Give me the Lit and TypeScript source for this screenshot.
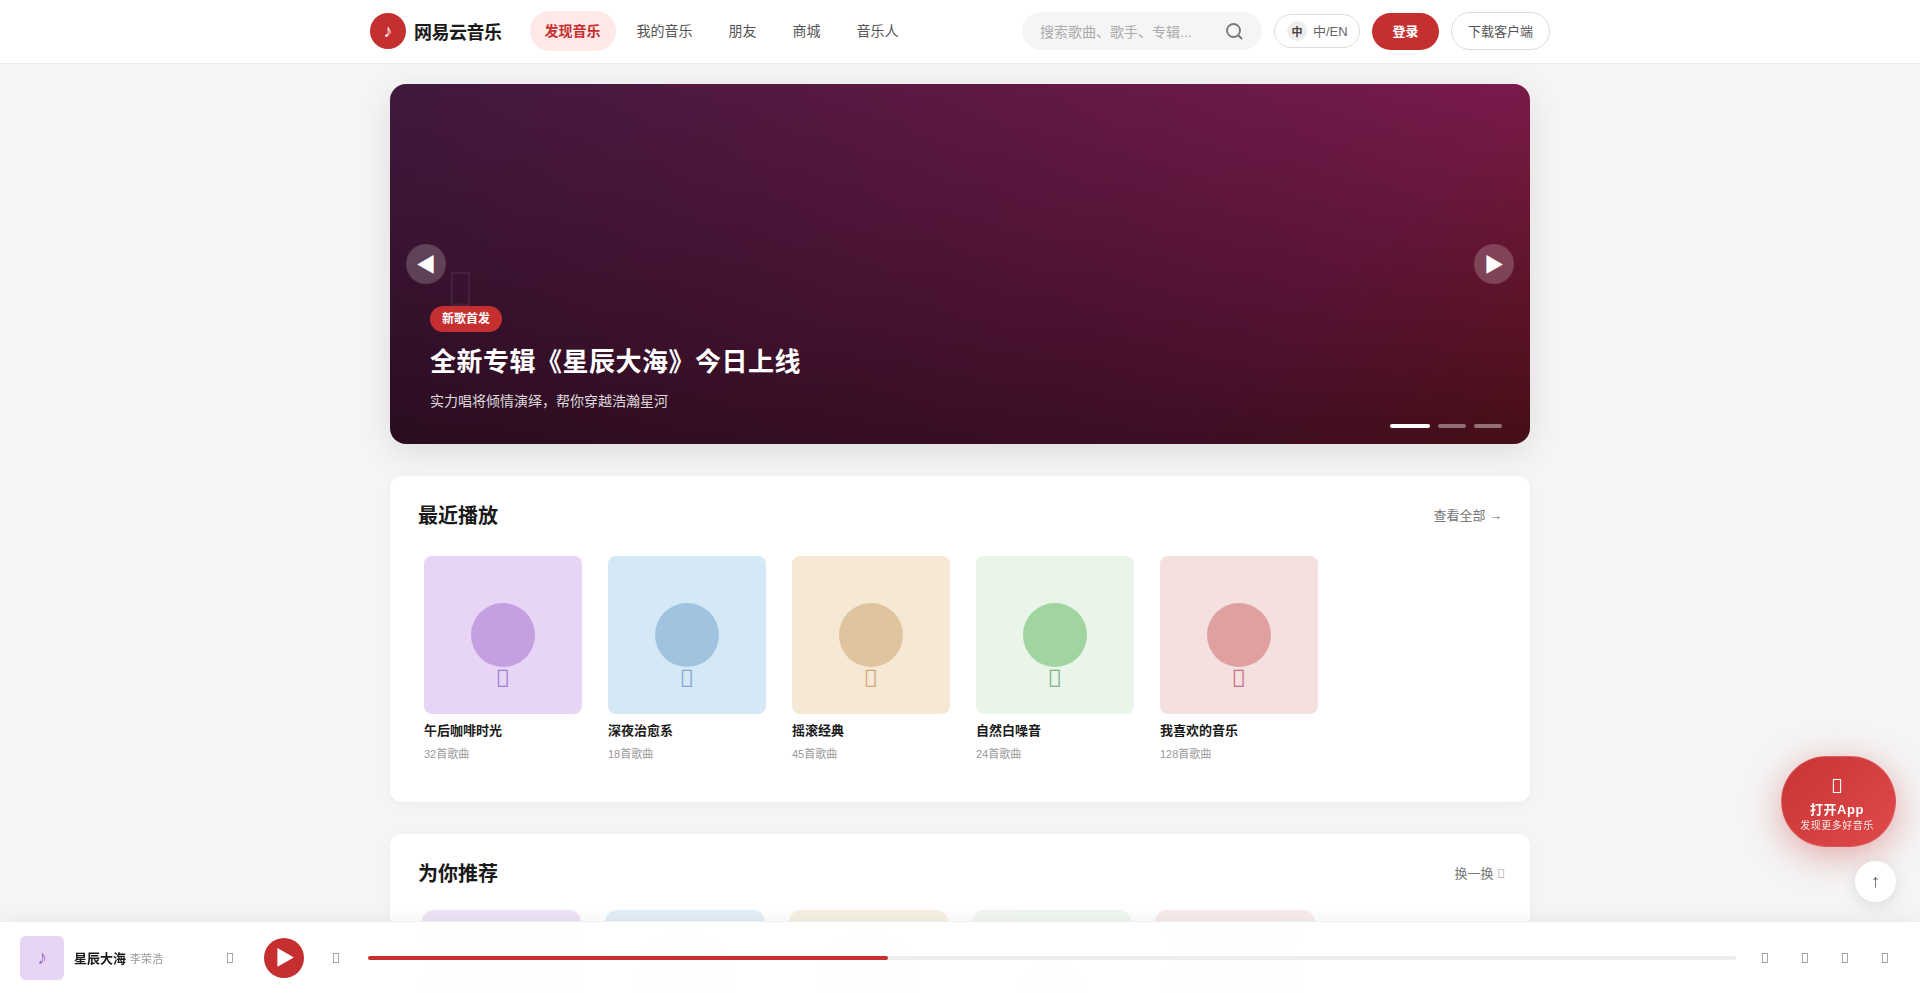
import { LitElement, html, css } from "lit";
import { customElement } from "lit/decorators.js";

const T = "\uf001";
const recent = [
  { c: "purple", t: "午后咖啡时光", s: "32首歌曲" },
  { c: "blue", t: "深夜治愈系", s: "18首歌曲" },
  { c: "orange", t: "摇滚经典", s: "45首歌曲" },
  { c: "green", t: "自然白噪音", s: "24首歌曲" },
  { c: "red", t: "我喜欢的音乐", s: "128首歌曲" },
];
const recs = [
  { c: "purple", t: "今日推荐", s: "30首歌曲" },
  { c: "blue", t: "华语流行", s: "50首歌曲" },
  { c: "orange", t: "民谣精选", s: "40首歌曲" },
  { c: "green", t: "轻音乐", s: "36首歌曲" },
  { c: "red", t: "经典老歌", s: "60首歌曲" },
];

@customElement("app-root")
export class AppRoot extends LitElement {
  static styles = css`
    :host {
      display: block;
      min-height: 100vh;
      background: #f5f5f5;
      font-family: "Liberation Sans", "Noto Sans CJK SC", sans-serif;
      color: #1a1a1a;
      padding-bottom: 90px;
    }
    .tofu { font-family: "Noto Sans", sans-serif; font-style: normal; font-weight: 400; }
    .header { background: #fff; border-bottom: 1px solid #eee; height: 64px; box-sizing: border-box; }
    .header-in { width: 1180px; margin: 0 auto; height: 62px; display: flex; align-items: center; }
    .logo { display: flex; align-items: center; gap: 8px; font-size: 18px; font-weight: 700; letter-spacing: -0.5px; margin-right: 28px; }
    .logo-mark { width: 36px; height: 36px; border-radius: 50%; background: #c62f2f; color: #fff; display: flex; align-items: center; justify-content: center; font-size: 18px; font-weight: 400; letter-spacing: 0; }
    .nav { display: flex; gap: 6px; }
    .nav a { padding: 10px 15px; font-size: 14px; line-height: 20px; color: #555; border-radius: 20px; }
    .nav a.on { background: #ffe8e8; color: #c62f2f; font-weight: 700; }
    .right { margin-left: auto; display: flex; align-items: center; gap: 12px; }
    .search { width: 240px; height: 38px; box-sizing: border-box; background: #f5f5f5; border-radius: 20px; display: flex; align-items: center; justify-content: space-between; padding: 0 18px; color: #aaa; font-size: 14px; }
    .search svg { display: block; }
    .lang { height: 34px; width: 86px; box-sizing: border-box; border: 1px solid #ddd; border-radius: 17px; display: flex; align-items: center; gap: 6px; padding: 0 12px 2px; font-size: 13px; color: #666; white-space: nowrap; }
    .lang b { width: 20px; height: 20px; margin-top: 2px; border-radius: 50%; background: #eee; font-size: 11px; font-weight: 700; color: #444; display: flex; align-items: center; justify-content: center; flex: none; }
    .login { height: 37px; width: 67px; box-sizing: border-box; padding-bottom: 2px; border-radius: 20px; background: #c62f2f; color: #fff; font-size: 13px; font-weight: 700; display: flex; align-items: center; justify-content: center; }
    .dl { height: 38px; width: 99px; box-sizing: border-box; padding-bottom: 2px; border: 1px solid #ddd; border-radius: 20px; color: #555; font-size: 13px; display: flex; align-items: center; justify-content: center; }
    .main { width: 1140px; margin: 20px auto 0; display: flex; flex-direction: column; gap: 32px; }
    .hero { position: relative; height: 360px; border-radius: 16px; background: linear-gradient(180deg, rgba(0,0,0,0) 0%, rgba(0,0,0,.5) 100%), linear-gradient(135deg, #40183c 0%, #7a1a4a 76%, #8a1c2c 100%); box-shadow: 0 8px 32px rgba(0,0,0,.1); display: flex; flex-direction: column; align-items: flex-start; justify-content: flex-end; padding: 0 40px 32px; box-sizing: border-box; }
    .hero-icon { position: absolute; left: 56px; top: 169px; font-size: 48px; line-height: 70px; color: rgba(255,255,255,.08); }
    .tag { height: 26px; box-sizing: border-box; padding: 0 12px; border-radius: 13px; background: #c62f2f; color: #fff; font-size: 12px; line-height: 26px; font-weight: 700; position: relative; }
    .hero h1 { margin: 11px 0 9px; font-size: 26px; line-height: 38px; letter-spacing: 0.5px; font-weight: 700; color: #fff; }
    .hero p { margin: 0; font-size: 14px; line-height: 22px; color: rgba(255,255,255,.85); }
    .arrow { position: absolute; top: 160px; width: 40px; height: 40px; box-sizing: border-box; padding-bottom: 2px; border-radius: 50%; background: rgba(255,255,255,.2); color: #fff; display: flex; align-items: center; justify-content: center; font-size: 20px; }
    .arrow.l { left: 16px; }
    .arrow.r { right: 16px; }
    .dots { position: absolute; right: 28px; bottom: 16px; display: flex; gap: 8px; }
    .dots i { width: 28px; height: 4px; border-radius: 2px; background: rgba(255,255,255,.4); }
    .dots i.on { width: 40px; background: #fff; }
    .section { background: #fff; border-radius: 12px; padding: 23px 28px 28px; box-shadow: 0 2px 12px rgba(0,0,0,.04); }
    .sec-head { display: flex; align-items: center; justify-content: space-between; height: 30px; margin-bottom: 27px; }
    .rec .sec-head { margin-bottom: 23px; }
    .sec-head h2 { margin: 0; font-size: 20px; font-weight: 700; }
    .sec-head span { font-size: 13px; color: #777; white-space: nowrap; }
    .sec-head .tofu { color: #aaa; margin-right: -3px; }
    .grid { display: flex; gap: 14px; padding-bottom: 12px; }
    .card { width: 170px; padding: 0 6px; box-sizing: border-box; }
    .cover { height: 158px; border-radius: 8px; position: relative; display: flex; align-items: center; justify-content: center; }
    .disc { width: 64px; height: 64px; border-radius: 50%; }
    .cover .ico { position: absolute; left: 0; right: 0; top: 107px; text-align: center; font-size: 24px; line-height: 30px; }
    .purple .cover { background: #e8d5f5; } .purple .disc { background: #c4a0e0; } .purple .ico { color: #9a80d0; }
    .blue .cover { background: #d5e8f5; } .blue .disc { background: #a0c4e0; } .blue .ico { color: #85a5d5; }
    .orange .cover { background: #f5e8d5; } .orange .disc { background: #e0c4a0; } .orange .ico { color: #d4a57a; }
    .green .cover { background: #e8f5e8; } .green .disc { background: #a0d4a0; } .green .ico { color: #7fb08a; }
    .red .cover { background: #f5e0e0; } .red .disc { background: #e0a0a0; } .red .ico { color: #c9708a; }
    .card .t { margin-top: 7px; font-size: 13px; line-height: 20px; font-weight: 700; }
    .card .s { margin-top: 5px; font-size: 11px; line-height: 16px; color: #999; }
    .grid2 { display: grid; grid-template-columns: repeat(6, 1fr); gap: 16px; }
    .grid2 .card { width: auto; padding: 0 4px; }
    .grid2 .cover { height: 160px; border-radius: 12px; opacity: .65; }
    .player { position: fixed; left: 0; right: 0; bottom: 0; height: 72px; box-sizing: border-box; border-top: 1px solid #eee; background: rgba(255,255,255,.95); backdrop-filter: blur(20px); box-shadow: 0 -2px 20px rgba(0,0,0,.05); display: flex; align-items: center; padding: 0 19px 0 20px; }
    .p-cover { width: 44px; height: 44px; border-radius: 6px; background: #e8d5f5; color: #9b6fc7; font-size: 20px; display: flex; align-items: center; justify-content: center; flex: none; }
    .p-info { width: 122px; margin: 0 18px 0 10px; display: flex; align-items: baseline; gap: 4px; flex: none; }
    .p-info b { font-size: 13px; }
    .p-info span { font-size: 11px; color: #999; }
    .pbtn { width: 32px; height: 32px; display: flex; align-items: center; justify-content: center; color: #888; flex: none; font-size: 14px; }
    .play { width: 40px; height: 40px; box-sizing: border-box; padding: 0 0 2px 2px; border-radius: 50%; background: #c62f2f; color: #fff; display: flex; align-items: center; justify-content: center; font-size: 20px; margin: 0 16px 0 18px; flex: none; }
    .bar { flex: 1; height: 4px; border-radius: 2px; background: #eee; margin: 0 13px 0 16px; }
    .bar i { display: block; width: 38%; height: 100%; border-radius: 2px; background: #c62f2f; }
    .p-right { display: flex; gap: 8px; }
    .fab { position: fixed; right: 24px; bottom: 146px; width: 115px; height: 91px; box-sizing: border-box; border-radius: 46px; background: linear-gradient(135deg, #c83333, #e04a4a); box-shadow: 0 8px 36px rgba(198,47,47,.4); color: #fff; display: flex; flex-direction: column; align-items: center; padding: 14px 3px 0 0; border: 1px solid rgba(255,255,255,.15); }
    .fab .tofu { font-size: 20px; line-height: 30px; margin-bottom: 0; }
    .fab b { font-size: 13px; line-height: 18px; letter-spacing: 0.5px; }
    .fab span { font-size: 10px; line-height: 14px; letter-spacing: 0.5px; opacity: .9; }
    .top { position: fixed; right: 24px; bottom: 91px; width: 41px; height: 41px; border-radius: 50%; background: #fff; color: #555; box-shadow: 0 4px 16px rgba(0,0,0,.1); display: flex; align-items: center; justify-content: center; font-size: 18px; }
  `;

  private card(c: { c: string; t: string; s: string }) {
    return html`<div class="card ${c.c}">
      <div class="cover"><div class="disc"></div><div class="ico tofu">${T}</div></div>
      <div class="t">${c.t}</div>
      <div class="s">${c.s}</div>
    </div>`;
  }

  render() {
    return html`
      <header class="header">
        <div class="header-in">
          <div class="logo"><span class="logo-mark">♪</span>网易云音乐</div>
          <nav class="nav">
            <a class="on">发现音乐</a><a>我的音乐</a><a>朋友</a><a>商城</a><a>音乐人</a>
          </nav>
          <div class="right">
            <div class="search">
              <span>搜索歌曲、歌手、专辑...</span>
              <svg width="20" height="20" viewBox="0 0 20 20" fill="none" stroke="#777" stroke-width="1.8"><circle cx="9.5" cy="9.5" r="6.5"></circle><path d="M14.5 14.5l3 3" stroke-linecap="round"></path></svg>
            </div>
            <div class="lang"><b>中</b>中/EN</div>
            <div class="login">登录</div>
            <div class="dl">下载客户端</div>
          </div>
        </div>
      </header>
      <main class="main">
        <section class="hero">
          <div class="hero-icon tofu">${T}</div>
          <div class="arrow l">◀</div>
          <div class="arrow r">▶</div>
          <div class="tag">新歌首发</div>
          <h1>全新专辑《星辰大海》今日上线</h1>
          <p>实力唱将倾情演绎，帮你穿越浩瀚星河</p>
          <div class="dots"><i class="on"></i><i></i><i></i></div>
        </section>
        <section class="section">
          <div class="sec-head"><h2>最近播放</h2><span>查看全部 →</span></div>
          <div class="grid">${recent.map((c) => this.card(c))}</div>
        </section>
        <section class="section rec">
          <div class="sec-head"><h2>为你推荐</h2><span>换一换 <i class="tofu">${T}</i></span></div>
          <div class="grid2">${recs.map((c) => this.card(c))}</div>
        </section>
      </main>
      <div class="fab"><i class="tofu">${T}</i><b>打开App</b><span>发现更多好音乐</span></div>
      <div class="top">↑</div>
      <footer class="player">
        <div class="p-cover">♪</div>
        <div class="p-info"><b>星辰大海</b><span>李荣浩</span></div>
        <div class="pbtn tofu">${T}</div>
        <div class="play">▶</div>
        <div class="pbtn tofu">${T}</div>
        <div class="bar"><i></i></div>
        <div class="p-right">
          <div class="pbtn tofu">${T}</div>
          <div class="pbtn tofu">${T}</div>
          <div class="pbtn tofu">${T}</div>
          <div class="pbtn tofu">${T}</div>
        </div>
      </footer>
    `;
  }
}
